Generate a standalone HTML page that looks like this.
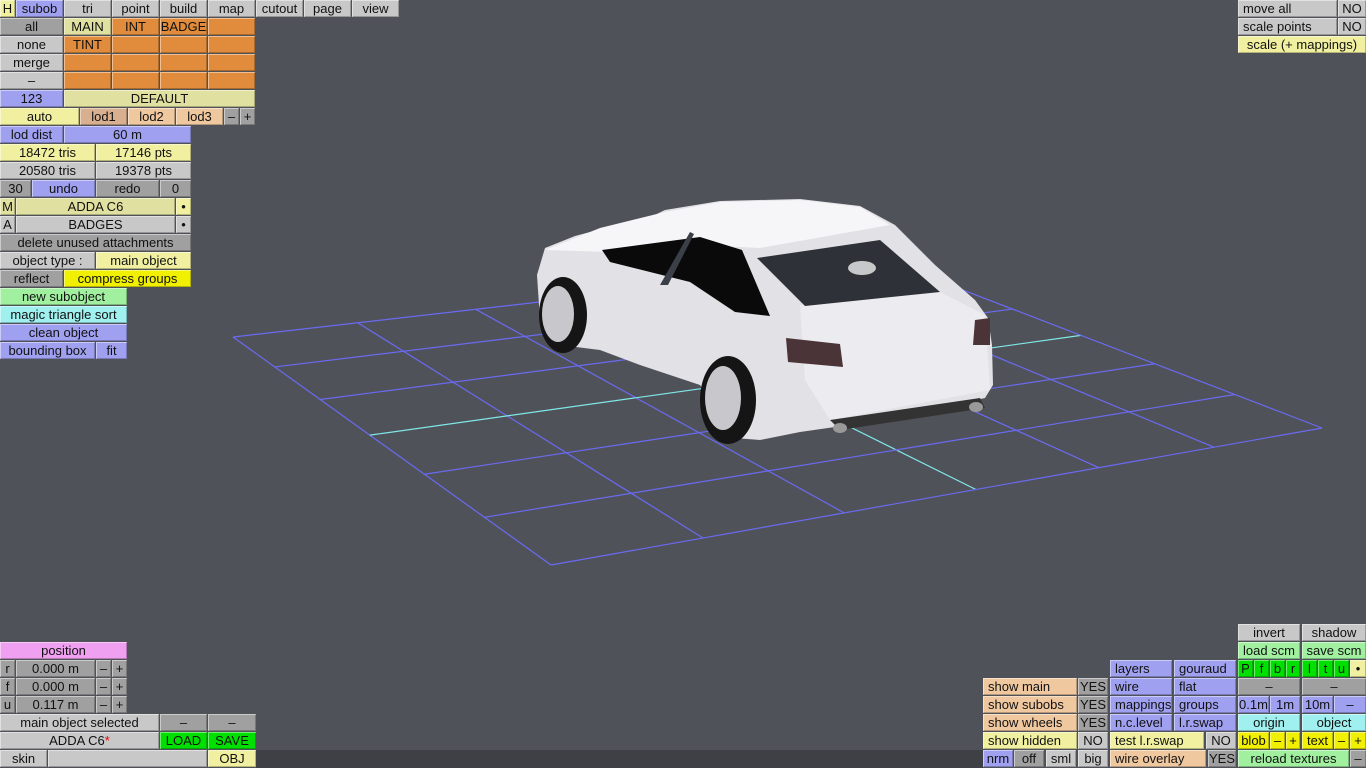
<!DOCTYPE html>
<html><head><meta charset="utf-8">
<style>
html,body{margin:0;padding:0}
body{width:1366px;height:768px;background:#50525a;position:relative;overflow:hidden;font-family:"Liberation Sans","DejaVu Sans",sans-serif;font-size:13px;color:#111}
.c{position:absolute;height:17px;line-height:18px;text-align:center;box-sizing:border-box;box-shadow:inset 1px 1px 0 rgba(255,255,255,.45),inset -1px -1px 0 rgba(0,0,0,.25);white-space:nowrap;overflow:hidden}
.l{text-align:left;padding-left:5px}
.g{background:#c8c8c8}.d{background:#a0a0a0}.b{background:#a0a0f0}.y{background:#f0f0a0}.k{background:#e0e0a0}
.o{background:#e08c3c}.p{background:#f0c8a0}.q{background:#d8b090}.Y{background:#f0f000}.G{background:#a0f0a0}
.C{background:#a0f0f0}.P{background:#f0a0f0}.L{background:#00e000}
svg{position:absolute;left:0;top:0}
</style></head><body>
<svg width="1366" height="768" id="sv">
<g id="grid"></g>
<g id="car">
<path d="M537,275 L545,248 L575,236 L605,228 L640,222 L665,210 L720,201 L800,199 L860,206 L895,225 L935,265 L975,300 L988,318 L992,345 L993,385 L985,398 L930,410 L870,422 L800,432 L760,440 L735,438 L700,385 L640,365 L600,350 L560,345 L540,320 Z" fill="#e2e2e6"/>
<path d="M545,250 L600,228 L665,212 L720,202 L800,200 L860,207 L890,225 L760,248 L700,245 L610,252 Z" fill="#f6f6f8"/>
<path d="M800,305 L940,292 L985,315 L990,390 L830,420 L805,380 Z" fill="#ececf0"/>
<path d="M757,258 L880,240 L940,292 L805,306 Z" fill="#2e3238"/>
<ellipse cx="862" cy="268" rx="14" ry="7" fill="#eee" opacity=".8"/>
<path d="M602,250 L700,237 L742,250 L770,316 L735,312 L690,282 L610,262 Z" fill="#0a0a0a"/>
<path d="M660,285 L690,232 L694,234 L668,285 Z" fill="#3b4048"/>
<path d="M786,338 L840,344 L843,367 L788,362 Z" fill="#4a3438"/>
<path d="M975,320 L990,318 L990,345 L973,345 Z" fill="#4a3438"/>
<path d="M830,420 L980,398 L985,408 L840,430 Z" fill="#333"/>
<ellipse cx="563" cy="315" rx="24" ry="38" fill="#151515"/>
<ellipse cx="558" cy="314" rx="16" ry="28" fill="#c8c8cc"/>
<ellipse cx="728" cy="400" rx="28" ry="44" fill="#151515"/>
<ellipse cx="723" cy="398" rx="18" ry="32" fill="#c8c8cc"/>
<ellipse cx="840" cy="428" rx="7" ry="5" fill="#999"/>
<ellipse cx="976" cy="407" rx="7" ry="5" fill="#999"/>
</g>
</svg>
<div style="position:absolute;left:256px;top:750px;width:727px;height:18px;background:#3e4046"></div>

<div class="c y" style="left:0;top:0;width:15px">H</div>
<div class="c b" style="left:16px;top:0;width:47px">subob</div>
<div class="c g" style="left:64px;top:0;width:47px">tri</div>
<div class="c g" style="left:112px;top:0;width:47px">point</div>
<div class="c g" style="left:160px;top:0;width:47px">build</div>
<div class="c g" style="left:208px;top:0;width:47px">map</div>
<div class="c g" style="left:256px;top:0;width:47px">cutout</div>
<div class="c g" style="left:304px;top:0;width:47px">page</div>
<div class="c g" style="left:352px;top:0;width:47px">view</div>

<div class="c d" style="left:0;top:18px;width:63px">all</div>
<div class="c k" style="left:64px;top:18px;width:47px">MAIN</div>
<div class="c o" style="left:112px;top:18px;width:47px">INT</div>
<div class="c o" style="left:160px;top:18px;width:47px">BADGE</div>
<div class="c o" style="left:208px;top:18px;width:47px"></div>
<div class="c g" style="left:0;top:36px;width:63px">none</div>
<div class="c o" style="left:64px;top:36px;width:47px">TINT</div>
<div class="c o" style="left:112px;top:36px;width:47px"></div>
<div class="c o" style="left:160px;top:36px;width:47px"></div>
<div class="c o" style="left:208px;top:36px;width:47px"></div>
<div class="c g" style="left:0;top:54px;width:63px">merge</div>
<div class="c o" style="left:64px;top:54px;width:47px"></div>
<div class="c o" style="left:112px;top:54px;width:47px"></div>
<div class="c o" style="left:160px;top:54px;width:47px"></div>
<div class="c o" style="left:208px;top:54px;width:47px"></div>
<div class="c g" style="left:0;top:72px;width:63px">–</div>
<div class="c o" style="left:64px;top:72px;width:47px"></div>
<div class="c o" style="left:112px;top:72px;width:47px"></div>
<div class="c o" style="left:160px;top:72px;width:47px"></div>
<div class="c o" style="left:208px;top:72px;width:47px"></div>
<div class="c b" style="left:0;top:90px;width:63px">123</div>
<div class="c k" style="left:64px;top:90px;width:191px">DEFAULT</div>
<div class="c y" style="left:0;top:108px;width:79px">auto</div>
<div class="c q" style="left:80px;top:108px;width:47px">lod1</div>
<div class="c p" style="left:128px;top:108px;width:47px">lod2</div>
<div class="c p" style="left:176px;top:108px;width:47px">lod3</div>
<div class="c d" style="left:224px;top:108px;width:15px">–</div>
<div class="c d" style="left:240px;top:108px;width:15px">+</div>
<div class="c b" style="left:0;top:126px;width:63px">lod dist</div>
<div class="c b" style="left:64px;top:126px;width:127px">60 m</div>
<div class="c y" style="left:0;top:144px;width:95px">18472 tris</div>
<div class="c y" style="left:96px;top:144px;width:95px">17146 pts</div>
<div class="c g" style="left:0;top:162px;width:95px">20580 tris</div>
<div class="c g" style="left:96px;top:162px;width:95px">19378 pts</div>
<div class="c d" style="left:0;top:180px;width:31px">30</div>
<div class="c b" style="left:32px;top:180px;width:63px">undo</div>
<div class="c d" style="left:96px;top:180px;width:63px">redo</div>
<div class="c d" style="left:160px;top:180px;width:31px">0</div>
<div class="c k" style="left:0;top:198px;width:15px">M</div>
<div class="c k" style="left:16px;top:198px;width:159px">ADDA C6</div>
<div class="c y" style="left:176px;top:198px;width:15px">•</div>
<div class="c g" style="left:0;top:216px;width:15px">A</div>
<div class="c g" style="left:16px;top:216px;width:159px">BADGES</div>
<div class="c g" style="left:176px;top:216px;width:15px">•</div>
<div class="c d" style="left:0;top:234px;width:191px">delete unused attachments</div>
<div class="c g" style="left:0;top:252px;width:95px">object type :</div>
<div class="c y" style="left:96px;top:252px;width:95px">main object</div>
<div class="c d" style="left:0;top:270px;width:63px">reflect</div>
<div class="c Y" style="left:64px;top:270px;width:127px">compress groups</div>
<div class="c G" style="left:0;top:288px;width:127px">new subobject</div>
<div class="c C" style="left:0;top:306px;width:127px">magic triangle sort</div>
<div class="c b" style="left:0;top:324px;width:127px">clean object</div>
<div class="c b" style="left:0;top:342px;width:95px">bounding box</div>
<div class="c b" style="left:96px;top:342px;width:31px">fit</div>

<div class="c g l" style="left:1238px;top:0;width:99px">move all</div>
<div class="c g" style="left:1338px;top:0;width:28px">NO</div>
<div class="c g l" style="left:1238px;top:18px;width:99px">scale points</div>
<div class="c g" style="left:1338px;top:18px;width:28px">NO</div>
<div class="c y" style="left:1238px;top:36px;width:128px">scale (+ mappings)</div>

<div class="c P" style="left:0;top:642px;width:127px">position</div>
<div class="c d" style="left:0;top:660px;width:15px">r</div>
<div class="c d" style="left:16px;top:660px;width:79px">0.000 m</div>
<div class="c d" style="left:96px;top:660px;width:15px">–</div>
<div class="c d" style="left:112px;top:660px;width:15px">+</div>
<div class="c d" style="left:0;top:678px;width:15px">f</div>
<div class="c d" style="left:16px;top:678px;width:79px">0.000 m</div>
<div class="c d" style="left:96px;top:678px;width:15px">–</div>
<div class="c d" style="left:112px;top:678px;width:15px">+</div>
<div class="c d" style="left:0;top:696px;width:15px">u</div>
<div class="c d" style="left:16px;top:696px;width:79px">0.117 m</div>
<div class="c d" style="left:96px;top:696px;width:15px">–</div>
<div class="c d" style="left:112px;top:696px;width:15px">+</div>
<div class="c g" style="left:0;top:714px;width:159px">main object selected</div>
<div class="c d" style="left:160px;top:714px;width:47px">–</div>
<div class="c d" style="left:208px;top:714px;width:48px">–</div>
<div class="c g" style="left:0;top:732px;width:159px">ADDA C6<span style="color:#e00">*</span></div>
<div class="c L" style="left:160px;top:732px;width:47px">LOAD</div>
<div class="c L" style="left:208px;top:732px;width:48px">SAVE</div>
<div class="c g" style="left:0;top:750px;width:47px">skin</div>
<div class="c g" style="left:48px;top:750px;width:159px"></div>
<div class="c y" style="left:208px;top:750px;width:48px">OBJ</div>

<div class="c g" style="left:1238px;top:624px;width:62px">invert</div>
<div class="c g" style="left:1302px;top:624px;width:64px">shadow</div>
<div class="c G" style="left:1238px;top:642px;width:62px">load scm</div>
<div class="c G" style="left:1302px;top:642px;width:64px">save scm</div>
<div class="c b l" style="left:1110px;top:660px;width:62px">layers</div>
<div class="c b l" style="left:1174px;top:660px;width:62px">gouraud</div>
<div class="c L" style="left:1238px;top:660px;width:15px">P</div>
<div class="c L" style="left:1254px;top:660px;width:15px">f</div>
<div class="c L" style="left:1270px;top:660px;width:15px">b</div>
<div class="c L" style="left:1286px;top:660px;width:14px">r</div>
<div class="c L" style="left:1302px;top:660px;width:15px">l</div>
<div class="c L" style="left:1318px;top:660px;width:15px">t</div>
<div class="c L" style="left:1334px;top:660px;width:15px">u</div>
<div class="c y" style="left:1350px;top:660px;width:16px">•</div>
<div class="c p l" style="left:983px;top:678px;width:94px">show main</div>
<div class="c d" style="left:1078px;top:678px;width:30px">YES</div>
<div class="c b l" style="left:1110px;top:678px;width:62px">wire</div>
<div class="c b l" style="left:1174px;top:678px;width:62px">flat</div>
<div class="c d" style="left:1238px;top:678px;width:62px">–</div>
<div class="c d" style="left:1302px;top:678px;width:64px">–</div>
<div class="c p l" style="left:983px;top:696px;width:94px">show subobs</div>
<div class="c d" style="left:1078px;top:696px;width:30px">YES</div>
<div class="c b l" style="left:1110px;top:696px;width:62px">mappings</div>
<div class="c b l" style="left:1174px;top:696px;width:62px">groups</div>
<div class="c b" style="left:1238px;top:696px;width:31px">0.1m</div>
<div class="c b" style="left:1270px;top:696px;width:30px">1m</div>
<div class="c b" style="left:1302px;top:696px;width:31px">10m</div>
<div class="c b" style="left:1334px;top:696px;width:32px">–</div>
<div class="c p l" style="left:983px;top:714px;width:94px">show wheels</div>
<div class="c d" style="left:1078px;top:714px;width:30px">YES</div>
<div class="c b l" style="left:1110px;top:714px;width:62px">n.c.level</div>
<div class="c b l" style="left:1174px;top:714px;width:62px">l.r.swap</div>
<div class="c C" style="left:1238px;top:714px;width:62px">origin</div>
<div class="c C" style="left:1302px;top:714px;width:64px">object</div>
<div class="c y l" style="left:983px;top:732px;width:94px">show hidden</div>
<div class="c g" style="left:1078px;top:732px;width:30px">NO</div>
<div class="c y l" style="left:1110px;top:732px;width:94px">test l.r.swap</div>
<div class="c g" style="left:1206px;top:732px;width:30px">NO</div>
<div class="c Y" style="left:1238px;top:732px;width:31px">blob</div>
<div class="c Y" style="left:1270px;top:732px;width:15px">–</div>
<div class="c Y" style="left:1286px;top:732px;width:14px">+</div>
<div class="c Y" style="left:1302px;top:732px;width:31px">text</div>
<div class="c Y" style="left:1334px;top:732px;width:15px">–</div>
<div class="c Y" style="left:1350px;top:732px;width:16px">+</div>
<div class="c b" style="left:983px;top:750px;width:30px">nrm</div>
<div class="c d" style="left:1014px;top:750px;width:30px">off</div>
<div class="c g" style="left:1046px;top:750px;width:30px">sml</div>
<div class="c g" style="left:1078px;top:750px;width:30px">big</div>
<div class="c p l" style="left:1110px;top:750px;width:96px">wire overlay</div>
<div class="c d" style="left:1208px;top:750px;width:28px">YES</div>
<div class="c G" style="left:1238px;top:750px;width:111px">reload textures</div>
<div class="c d" style="left:1350px;top:750px;width:16px">–</div>

<script>
(function(){
var P0=[233,337],P1=[551,565],P2=[1322,428],P3=[890,262];
var x0=P0[0],y0=P0[1],x1=P1[0],y1=P1[1],x2=P2[0],y2=P2[1],x3=P3[0],y3=P3[1];
var dx1=x1-x2,dx2=x3-x2,dy1=y1-y2,dy2=y3-y2,sx=x0-x1+x2-x3,sy=y0-y1+y2-y3;
var den=dx1*dy2-dx2*dy1;
var g=(sx*dy2-dx2*sy)/den,h=(dx1*sy-sx*dy1)/den;
var a=x1-x0+g*x1,b=x3-x0+h*x3,c=x0,d=y1-y0+g*y1,e=y3-y0+h*y3,f=y0;
function m(u,v){var w=g*u+h*v+1;return [(a*u+b*v+c)/w,(d*u+e*v+f)/w];}
var s='',N=6;
for(var i=0;i<=N;i++){var t=i/N;
 var A=m(t,0),B=m(t,1),col=(i==3)?'#80e8e8':'#6a6af0';
 s+='<line x1="'+A[0]+'" y1="'+A[1]+'" x2="'+B[0]+'" y2="'+B[1]+'" stroke="'+col+'" stroke-width="1.2"/>';
 A=m(0,t);B=m(1,t);
 s+='<line x1="'+A[0]+'" y1="'+A[1]+'" x2="'+B[0]+'" y2="'+B[1]+'" stroke="'+col+'" stroke-width="1.2"/>';
}
document.getElementById('grid').innerHTML=s;
})();
</script>
</body></html>
